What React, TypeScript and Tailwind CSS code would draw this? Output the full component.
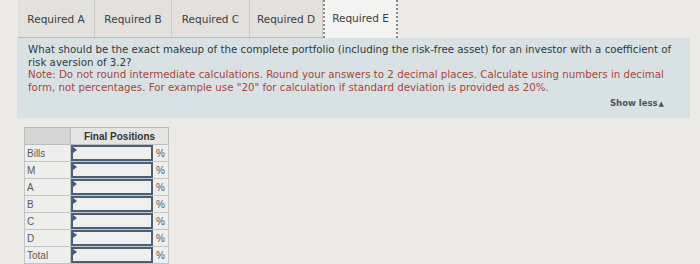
const tabs = ['Required A', 'Required B', 'Required C', 'Required D', 'Required E']
const tabWidths = ['w-[77px]', 'w-[77px]', 'w-[78px]', 'w-[73px]', 'w-[75px]']
const rows = ['Bills', 'M', 'A', 'B', 'C', 'D', 'Total']

export default function App() {
  return (
    <div className="w-[700px] h-[264px] overflow-hidden bg-[#ebeae6] font-['DejaVu_Sans',sans-serif]">
      {/* Tabs */}
      <div className="flex pl-[18px] h-[38px]">
        {tabs.map((t, i) => {
          const active = i === tabs.length - 1
          return (
            <div
              key={t}
              className={`${tabWidths[i]} flex items-center justify-center text-[10.5px] pt-[2px] text-[#404040] ${
                active
                  ? 'bg-[#f3f3f1] border-x-2 border-dotted border-[#8a8a8a] pb-[2px]'
                  : 'bg-[#e2e1de] border-r border-[#c9c9c6] border-b border-b-[#bdbdbb]'
              }`}
            >
              {t}
            </div>
          )
        })}
      </div>

      {/* Question panel */}
      <div className="ml-[17px] w-[673px] h-[80px] bg-[#d8e2e5] pl-[11px] pr-[8px] pt-[5px] text-[10.25px] leading-[12.5px]">
        <p className="text-[#2f3a40]">
          What should be the exact makeup of the complete portfolio (including the risk-free asset) for an investor with a coefficient of risk aversion of 3.2?
        </p>
        <p className="text-[#ad4236]">
          Note: Do not round intermediate calculations. Round your answers to 2 decimal places. Calculate using numbers in decimal form, not percentages. For example use "20" for calculation if standard deviation is provided as 20%.
        </p>
        <div className="flex justify-end pr-[18px] mt-[4px]">
          <span className="text-[8.5px] font-bold text-[#4a5560]">
            Show less<span className="text-[7px] ml-[1px]">▲</span>
          </span>
        </div>
      </div>

      {/* Table */}
      <div className="ml-[24px] mt-[9px] w-[145px] font-['Liberation_Sans',sans-serif]">
        <div className="flex h-[18px] border border-[#bdbdbd]">
          <div className="w-[46px] bg-[#d6d6d6] border-r border-[#bdbdbd]" />
          <div className="flex-1 bg-[#e4e4e2] flex items-center justify-center text-[10px] font-bold text-[#333]">
            Final Positions
          </div>
        </div>
        {rows.map((r) => (
          <div key={r} className="flex h-[17px] border-x border-b border-[#c4c4c4] bg-[#eeeeec]">
            <div className="w-[46px] border-r border-[#c4c4c4] pl-[2px] flex items-center text-[10px] text-[#5a5a5a]">{r}</div>
            <div className="w-[82px] relative border-2 border-[#4a6078] bg-[#efefed]">
              <span className="absolute left-0 top-0 w-0 h-0 border-t-[3px] border-b-[3px] border-l-[4px] border-t-transparent border-b-transparent border-l-[#3d5a8a]" />
            </div>
            <div className="flex-1 flex items-center justify-center text-[10px] text-[#5a5a5a]">%</div>
          </div>
        ))}
      </div>
    </div>
  )
}
